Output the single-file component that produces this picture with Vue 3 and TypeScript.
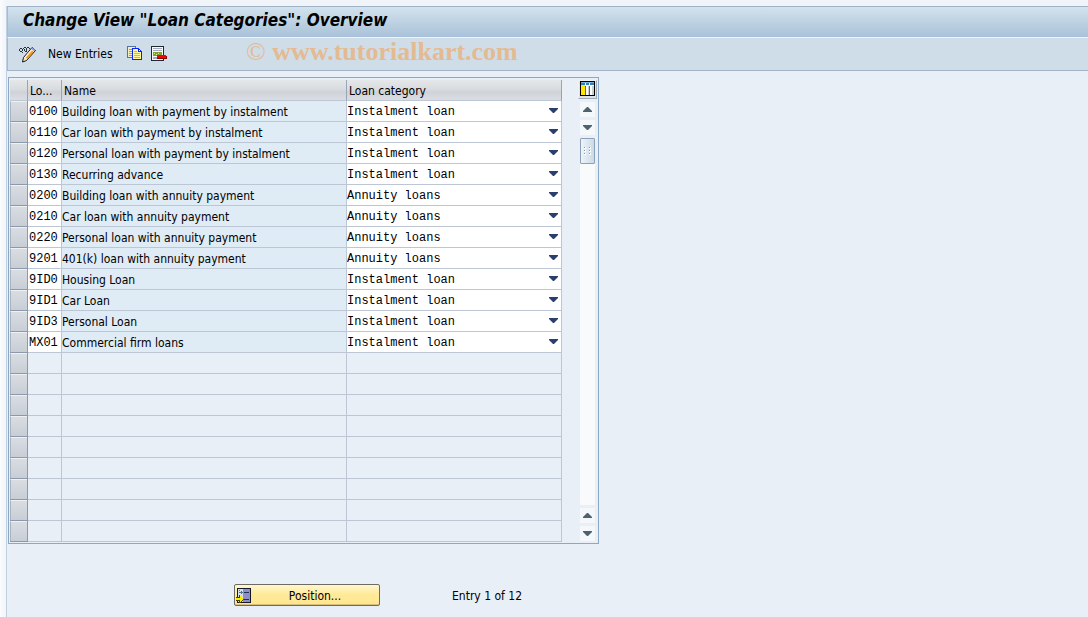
<script setup lang="ts">
import { ref } from 'vue'

interface LoanRow {
  code: string
  name: string
  category: string
}

const INST = 'Instalment loan'
const ANN = 'Annuity loans'
const categories = [INST, ANN]

const rows = ref<LoanRow[]>([
  { code: '0100', name: 'Building loan with payment by instalment', category: INST },
  { code: '0110', name: 'Car loan with payment by instalment', category: INST },
  { code: '0120', name: 'Personal loan with payment by instalment', category: INST },
  { code: '0130', name: 'Recurring advance', category: INST },
  { code: '0200', name: 'Building loan with annuity payment', category: ANN },
  { code: '0210', name: 'Car loan with annuity payment', category: ANN },
  { code: '0220', name: 'Personal loan with annuity payment', category: ANN },
  { code: '9201', name: '401(k) loan with annuity payment', category: ANN },
  { code: '9ID0', name: 'Housing Loan', category: INST },
  { code: '9ID1', name: 'Car Loan', category: INST },
  { code: '9ID3', name: 'Personal Loan', category: INST },
  { code: 'MX01', name: 'Commercial firm loans', category: INST },
])
const emptyRows = 9
</script>

<template>
  <div class="page">
    <main class="window">
      <header class="titlebar">
        <h1>Change View "Loan Categories": Overview</h1>
      </header>
      <div class="toolbar" role="toolbar" aria-label="Application toolbar">
        <button type="button" class="tool" aria-label="Display or change">
          <svg width="17" height="17" viewBox="0 0 17 17">
            <path d="M1 2h2v1H1zM0 3h1v2H0zM1 5h2v1H1zM3 3h1v2H3zM4 2h1v1H4zM5 1h2v1H5zM5 3h1v2H5zM6 5h2v1H6zM7 2h1v3H7zM8 1h2v1H8zM10 2h1v1h-1zM3 6h1v1H3z" fill="#26323e" />
            <path d="M13 1.500L16.500 4.500L7.500 14.500L3.500 16L4.500 11.500z" fill="#fbe6c4" stroke="#15181c" />
            <path d="M12 4.500L6 11.200" stroke="#fff7e4" stroke-width="1" />
            <path d="M13.800 5.200L7.600 12.300" stroke="#f59a1f" stroke-width="2" />
            <path d="M12.900 2.300L15.700 4.700" stroke="#8c9be0" stroke-width="1.600" />
          </svg>
        </button>
        <button type="button" class="tool text-tool">New Entries</button>
        <button type="button" class="tool copy" aria-label="Copy as">
          <svg width="15" height="15" viewBox="0 0 15 15" shape-rendering="crispEdges">
            <path d="M0 0h9v3h2v9H0z" fill="#55739d" />
            <path d="M1 1h7v3h2v7H1z" fill="#f2eec0" />
            <path d="M2 3h3v1H2zM2 5h3v1H2zM2 7h3v1H2zM2 9h3v1H2z" fill="#a3a15c" />
            <path d="M5 2h7v1h1v1h1v1h1v9H5z" fill="#0824f0" />
            <path d="M6 3h5v3h3v7H6z" fill="#fff79a" />
            <path d="M12 4h1v1h-1z" fill="#fff" />
            <path d="M7 5h3v1H7zM7 7h6v1H7zM7 9h6v1H7zM7 11h6v1H7z" fill="#c9bd46" />
          </svg>
        </button>
        <button type="button" class="tool delete" aria-label="Delete">
          <svg width="16" height="15" viewBox="0 0 16 15" shape-rendering="crispEdges">
            <path d="M0 0h13v15H0z" fill="#1f2730" />
            <path d="M1 1h11v13H1z" fill="#f8faf9" />
            <path d="M2 2h9v1H2zM2 4h9v1H2z" fill="#a4a6c2" />
            <path d="M2 6h9v4H2z" fill="#80a32c" />
            <path d="M3 7h1v1H3zM5 8h1v1H5zM7 7h1v1H7z" fill="#d6e59b" />
            <path d="M2 11h4v2H2z" fill="#a4a6c2" />
            <path d="M6 9h9v1h1v3H6z" fill="#8b0000" />
            <path d="M6 9h9v3H6z" fill="#f00" />
          </svg>
        </button>
        <span class="watermark"><span class="mark">©</span> www.tutorialkart.com</span>
      </div>

      <section class="panel" aria-label="Loan categories">
        <table>
          <colgroup>
            <col class="c-sel" />
            <col class="c-code" />
            <col class="c-name" />
            <col class="c-cat" />
          </colgroup>
          <thead>
            <tr>
              <th aria-label="Select all"></th>
              <th scope="col">Lo...</th>
              <th scope="col">Name</th>
              <th scope="col">Loan category</th>
            </tr>
          </thead>
          <tbody>
            <tr v-for="row in rows" :key="row.code">
              <td class="sel"><button type="button" :aria-label="`Select ${row.code}`"></button></td>
              <td class="code">{{ row.code }}</td>
              <td class="name">{{ row.name }}</td>
              <td class="cat">
                <div class="dropdown">
                  <select v-model="row.category" :aria-label="`Loan category ${row.code}`">
                    <option v-for="c in categories" :key="c">{{ c }}</option>
                  </select>
                  <svg width="9" height="6" viewBox="0 0 9 6"><path d="M0 0h9v1L5 5H4L0 1z" fill="#2b3f6f" /></svg>
                </div>
              </td>
            </tr>
            <tr v-for="n in emptyRows" :key="n">
              <td class="sel"><button type="button" :aria-label="`Select empty row ${n}`"></button></td>
              <td></td>
              <td></td>
              <td></td>
            </tr>
          </tbody>
        </table>

        <div class="side">
          <button type="button" class="config" aria-label="Configure table">
            <svg width="15" height="15" viewBox="0 0 15 15" shape-rendering="crispEdges">
              <path d="M0 0h15v15H0z" fill="#000" />
              <path d="M1 1h13v13H1z" fill="#fff" />
              <path d="M1 1h13v3H1z" fill="#2f7fb9" />
              <path d="M1 1h13v1H1z" fill="#79b7e2" />
              <path d="M1 4h4v10H1z" fill="#ffe800" />
              <path d="M5 5h1v9H5zM9 5h1v9H9z" fill="#59676c" />
              <path d="M8 5h1v9H8zM12 5h2v9h-2z" fill="#c9d0d2" />
              <path d="M5 2h1v2H5zM9 2h1v2H9z" fill="#fff" />
            </svg>
          </button>
          <button type="button" class="arrow" aria-label="First">
            <svg width="9" height="5" viewBox="0 0 9 5"><path d="M4 0h1l4 4v1H0V4z" /></svg>
          </button>
          <button type="button" class="arrow" aria-label="Next">
            <svg width="9" height="5" viewBox="0 0 9 5"><path d="M0 0h9v1L5 5H4L0 1z" /></svg>
          </button>
          <div class="track">
            <button type="button" class="thumb" aria-label="Scroll position">
              <svg width="7" height="8" viewBox="0 0 7 8" shape-rendering="crispEdges">
                <path d="M0 0h2v2H0zM5 0h2v2H5zM0 3h2v2H0zM5 3h2v2H5zM0 6h2v2H0zM5 6h2v2H5z" fill="#fff" />
                <path d="M0 0h1v1H0zM5 0h1v1H5zM0 3h1v1H0zM5 3h1v1H5zM0 6h1v1H0zM5 6h1v1H5z" fill="#8494a6" />
              </svg>
            </button>
          </div>
          <button type="button" class="arrow" aria-label="Previous">
            <svg width="9" height="5" viewBox="0 0 9 5"><path d="M4 0h1l4 4v1H0V4z" /></svg>
          </button>
          <button type="button" class="arrow" aria-label="Last">
            <svg width="9" height="5" viewBox="0 0 9 5"><path d="M0 0h9v1L5 5H4L0 1z" /></svg>
          </button>
        </div>
      </section>

      <footer class="actions">
        <button type="button" class="position">
          <svg width="15" height="15" viewBox="0 0 15 15" shape-rendering="crispEdges">
            <path d="M1 0h14v15H1z" fill="#14182a" />
            <path d="M2 1h12v13H2z" fill="#8d90c4" />
            <path d="M2 1h5v13H2z" fill="#cfe0ee" />
            <path d="M3 4h4v1H3zM5 3h1v3H5zM3 2h1v1H3z" fill="#5c7084" />
            <path d="M8 4h5v1H8zM8 11h5v1H8z" fill="#2a2d58" />
            <path d="M0 9h3V7h1v1h1v1h1v1h1v1h1v1H7v1H6v1H5v1H3v-2H0z" fill="#4a4300" />
            <path d="M0 10h4V8h1v1h1v1h1v2H6v1H5v1H4v-2H0z" fill="#ffe900" />
          </svg>
          <span>Position...</span>
        </button>
        <span class="entry">Entry 1 of 12</span>
      </footer>
    </main>
  </div>
</template>

<style>
html,
body {
  background: #e8eff6;
}
</style>

<style scoped>
.page {
  box-sizing: border-box;
  min-height: 100vh;
  padding: 6px 0 0 6px;
  background: linear-gradient(90deg, #fafcfd 0, #f1f5f9 6px, #f1f5f9 100%);
  font: 12px/18px 'DejaVu Sans Condensed', 'DejaVu Sans', sans-serif;
  color: #000;
  overflow: hidden;
}
button {
  margin: 0;
  padding: 0;
  border: 0;
  background: none;
  font: inherit;
  color: inherit;
}
svg {
  display: block;
  flex: none;
}
.window {
  min-height: calc(100vh - 6px);
  box-sizing: border-box;
  border-left: 1px solid #c3d0e2;
  background: #e8eff6;
}
.titlebar {
  height: 31px;
  box-sizing: border-box;
  padding-left: 15px;
  border-top: 1px solid #9fb3c8;
  border-left: 1px solid #a9bacd;
  background: linear-gradient(#d3e2ee, #b9cfe0 60%, #a9c1da);
}
h1 {
  margin: 0;
  font-size: 17px;
  line-height: 26px;
  font-weight: bold;
  font-style: italic;
  white-space: nowrap;
}
.toolbar {
  position: relative;
  display: flex;
  align-items: center;
  height: 34px;
  box-sizing: border-box;
  padding-left: 11px;
  border-top: 1px solid #eef4f9;
  border-bottom: 1px solid #a3b4c8;
  border-left: 1px solid #a9bacd;
  background: #cfdde8;
}
.text-tool {
  margin-left: 12px;
}
.copy {
  margin-left: 14px;
  padding-bottom: 2px;
}
.delete {
  margin-left: 9px;
  padding-bottom: 2px;
}
.watermark {
  position: absolute;
  left: 238px;
  top: 0;
  font: bold 26px/28px 'Liberation Serif', serif;
  color: #e4ba92;
  white-space: nowrap;
  pointer-events: none;
}
.mark {
  font-weight: normal;
}
.panel {
  display: flex;
  width: max-content;
  margin: 6px 0 0 1px;
  padding: 2px 1px 1px;
  border: 1px solid #8ba9c6;
}
table {
  table-layout: fixed;
  width: 552px;
  border-collapse: separate;
  border-spacing: 0;
}
.c-sel {
  width: 18px;
}
.c-code {
  width: 34px;
}
.c-name {
  width: 285px;
}
.c-cat {
  width: 215px;
}
th,
td {
  height: 21px;
  box-sizing: border-box;
  padding: 2px 0 0;
  border-right: 1px solid #bcc6d5;
  border-bottom: 1px solid #bcc6d5;
  text-align: left;
  font-weight: normal;
  white-space: nowrap;
}
th {
  padding-left: 2px;
  border-right-color: #98a5b4;
  background: linear-gradient(#e5e7e9, #d9dce0 45%, #cfd3d9 60%, #dadde2);
}
.sel {
  padding: 0;
  border-color: #8d99aa;
}
.sel button {
  display: block;
  width: 100%;
  height: 20px;
  border-top: 1px solid #eef1f4;
  border-left: 1px solid #a9b3c0;
  background: linear-gradient(#d9dde2, #c8ced6);
}
.code,
.cat {
  background: #fff;
}
.code,
select {
  font-family: 'Liberation Mono', monospace;
}
.code {
  padding-left: 1px;
}
.name {
  background: #dfebf5;
}
.cat {
  padding: 0;
}
.dropdown {
  display: grid;
  grid-template-columns: 1fr 9px;
  align-items: center;
  padding-right: 3px;
}
select {
  grid-area: 1 / 1 / 2 / 3;
  box-sizing: border-box;
  width: 100%;
  height: 20px;
  margin: 0;
  padding: 2px 0 0;
  border: 0;
  appearance: none;
  background: transparent;
  font-size: 12px;
  color: #000;
}
.dropdown svg {
  grid-area: 1 / 2;
  pointer-events: none;
}
.side {
  display: flex;
  flex-direction: column;
  align-items: center;
  gap: 3px;
  margin-left: 16px;
  padding-bottom: 1px;
}
.config {
  padding: 0 1px 2px;
  border: 1px solid #a2acb6;
  border-top-color: #eef2f5;
  border-left-color: #eef2f5;
  background: #dde3e8;
}
.arrow {
  display: grid;
  place-items: center;
  width: 15px;
  height: 15px;
  background: #f5f8fb;
}
.arrow path {
  fill: #4f6270;
}
.track {
  flex: 1;
  width: 15px;
  background: #f8fafc;
}
.thumb {
  display: grid;
  place-items: center;
  width: 15px;
  height: 26px;
  box-sizing: border-box;
  border: 1px solid #8ca0b8;
  border-radius: 1px;
  background: linear-gradient(90deg, #eef4f9, #cbdae7);
}
.actions {
  display: flex;
  align-items: center;
  margin: 40px 0 0 227px;
}
.position {
  display: flex;
  align-items: center;
  width: 146px;
  height: 22px;
  box-sizing: border-box;
  padding-left: 1px;
  border: 1px solid #6f6b62;
  border-radius: 2px;
  background: linear-gradient(#fff6cf, #ffeb9b 45%, #ffe68e);
  box-shadow: inset 0 -1px #d8c078;
}
.position span {
  flex: 1;
  padding-top: 2px;
  text-align: center;
}
.entry {
  padding-top: 2px;
  margin-left: 72px;
}
</style>
